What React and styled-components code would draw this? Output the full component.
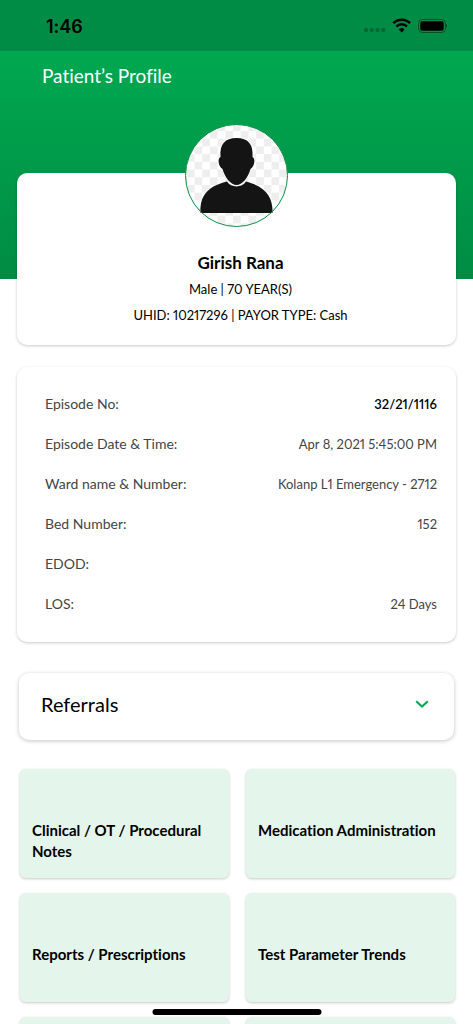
import React, { useState } from 'react';
import styled, { createGlobalStyle } from 'styled-components';

const episode = [
    { label: 'Episode No:', value: '32/21/1116', strong: true },
    { label: 'Episode Date & Time:', value: 'Apr 8, 2021 5:45:00 PM' },
    { label: 'Ward name & Number:', value: 'Kolanp L1 Emergency - 2712' },
    { label: 'Bed Number:', value: '152' },
    { label: 'EDOD:', value: '' },
    { label: 'LOS:', value: '24 Days' },
];

const tiles = [
    'Clinical / OT / Procedural Notes',
    'Medication Administration',
    'Reports / Prescriptions',
    'Test Parameter Trends',
];

function StatusIcons() {
    return (
        <svg width="84" height="16" viewBox="0 0 84 16" aria-hidden="true">
            <g fill="#000" opacity="0.25">
                <rect x="1" y="10" width="4" height="4" rx="1.5" />
                <rect x="6.8" y="10" width="4" height="4" rx="1.5" />
                <rect x="12.5" y="10" width="4" height="4" rx="1.5" />
                <rect x="18.2" y="10" width="4" height="4" rx="1.5" />
            </g>
            <g fill="none" stroke="#000" strokeWidth="2.5">
                <path d="M30.3 5.2a11.9 11.9 0 0 1 16.8 0" />
                <path d="M33.4 8.5a7.6 7.6 0 0 1 10.6 0" />
            </g>
            <path d="M38.7 14.4l-2.9-2.9a4.1 4.1 0 0 1 5.8 0z" fill="#000" />
            <rect x="55.5" y="1.5" width="27" height="13" rx="4" fill="none" stroke="#000" strokeOpacity="0.4" />
            <rect x="57.3" y="3.3" width="23.4" height="9.4" rx="2.2" fill="#000" />
            <path d="M83 6v4c1.3-.7 1.3-3.3 0-4z" fill="#000" fillOpacity="0.45" />
        </svg>
    );
}

function Silhouette() {
    return (
        <svg viewBox="0 0 103 103" role="img" aria-label="Patient">
            <defs>
                <pattern id="checks" x="9.5" y="7" width="15.4" height="15.4" patternUnits="userSpaceOnUse">
                    <rect width="15.4" height="15.4" fill="#fff" />
                    <rect width="7.7" height="7.7" fill="#eee" />
                    <rect x="7.7" y="7.7" width="7.7" height="7.7" fill="#eee" />
                </pattern>
            </defs>
            <circle cx="51.5" cy="51.5" r="51" fill="url(#checks)" />
            <path
                d="M15.5 89C15 74 20 63 42 57.5C46 64 57 64 61 57.5C82 63 88 74 87.5 89Z"
                fill="#141414"
            />
            <path
                d="M51.5 14C40 14 34.5 20 35.5 33C32.5 34 33 42 37.5 45C40 54 46 61 51.5 61C57 61 63 54 65.5 45C70 42 70.5 34 67.5 33C68.5 20 63 14 51.5 14Z"
                fill="#141414"
                stroke="#fff"
                strokeWidth="1.5"
                paintOrder="stroke"
            />
            <circle cx="51.5" cy="51.5" r="51" fill="none" stroke="#0a8f45" />
        </svg>
    );
}

function App() {
    const [open, setOpen] = useState(false);

    return (
        <Screen>
            <GlobalStyle />
            <StatusBar>
                <Time>1:46</Time>
                <StatusIcons />
            </StatusBar>
            <Hero>
                <Title>Patient’s Profile</Title>
            </Hero>
            <Content>
                <ProfileCard>
                    <Avatar>
                        <Silhouette />
                    </Avatar>
                    <ProfileText>
                        <Name>Girish Rana</Name>
                        <Detail>Male | 70 YEAR(S)</Detail>
                        <Detail>UHID: 10217296 | PAYOR TYPE: Cash</Detail>
                    </ProfileText>
                </ProfileCard>
                <EpisodeCard>
                    {episode.map((row) => (
                        <Row key={row.label}>
                            <dt>{row.label}</dt>
                            <Value $strong={row.strong}>{row.value}</Value>
                        </Row>
                    ))}
                </EpisodeCard>
                <Referrals type="button" aria-expanded={open} onClick={() => setOpen(!open)}>
                    Referrals
                    <Chevron $open={open} width="14" height="8" viewBox="0 0 14 8" aria-hidden="true">
                        <path d="M1.2 1.2L7 6.6L12.8 1.2" />
                    </Chevron>
                </Referrals>
                <Tiles>
                    {tiles.map((tile) => (
                        <Tile key={tile} type="button">{tile}</Tile>
                    ))}
                    <Tile type="button" aria-label="Discharge" />
                    <Tile type="button" aria-label="Billing" />
                </Tiles>
            </Content>
            <HomeIndicator />
        </Screen>
    );
}

export default App;

const GlobalStyle = createGlobalStyle`
* {
    box-sizing: border-box;
}
body {
    margin: 0;
    background: #fff;
    color: #000;
    font-family: Lato, "Liberation Sans", sans-serif;
    font-variant-ligatures: none;
    font-variant-numeric: proportional-nums;
}
button {
    font-family: inherit;
    font-variant-ligatures: inherit;
    color: inherit;
    border: 0;
    cursor: pointer;
}
`

const Screen = styled.div`
height: 100vh;
overflow-x: hidden;
overflow-y: auto;
scrollbar-width: none;
`

const StatusBar = styled.header`
position: sticky;
top: 0;
z-index: 2;
display: flex;
align-items: center;
justify-content: space-between;
height: 51px;
padding: 1px 26px 0 46px;
background: #008c44;
`

const Time = styled.span`
font-family: Inter, sans-serif;
font-size: 18px;
font-weight: 600;
`

const Hero = styled.div`
height: 228px;
padding: 12px 42px;
background: linear-gradient(#00a850, #008c44);
`

const Title = styled.h1`
margin: 0;
color: #fff;
font-size: 19px;
font-weight: 400;
line-height: 26px;
`

const Content = styled.main`
display: flex;
flex-direction: column;
margin-top: -106px;
padding: 0 17px 24px;
`

const Card = styled.section`
background: #fff;
border-radius: 10px;
box-shadow: 0 1px 3px rgba(0, 0, 0, 0.22);
`

const ProfileCard = styled(Card)`
display: flex;
flex-direction: column;
align-items: center;
padding-bottom: 17px;
`

const Avatar = styled.div`
width: 103px;
height: 103px;
margin-top: -49px;
margin-bottom: 22px;

svg {
    display: block;
}
`

const ProfileText = styled.div`
padding-left: 8px;
text-align: center;
`

const Name = styled.h2`
margin: 0;
font-size: 17px;
font-weight: 700;
line-height: 27px;
`

const Detail = styled.p`
margin: 0;
font-size: 13px;
line-height: 26px;
`

const EpisodeCard = styled(Card).attrs({ as: 'dl' })`
margin: 22px 0 0;
padding: 17px 19px 18px 28px;
`

const Row = styled.div`
display: flex;
align-items: baseline;
justify-content: space-between;
height: 40px;
color: #444;
font-size: 14px;
line-height: 40px;
`

const Value = styled.dd`
margin: 0;
color: ${(props) => (props.$strong ? '#000' : 'inherit')};
font-size: 13px;
font-weight: ${(props) => (props.$strong ? 600 : 400)};
`

const Referrals = styled.button`
display: flex;
align-items: center;
justify-content: space-between;
height: 67px;
margin: 31px 2px 0;
padding: 0 25px 6px 22px;
background: #fff;
border-radius: 10px;
box-shadow: 0 1px 4px rgba(0, 0, 0, 0.24);
font-size: 20px;
`

const Chevron = styled.svg`
fill: none;
stroke: #00a850;
stroke-width: 2;
transform: ${(props) => (props.$open ? 'rotate(180deg)' : 'none')};
`

const Tiles = styled.div`
display: grid;
grid-template-columns: 1fr 1fr;
gap: 15px 17px;
margin-top: 29px;
padding: 0 1px 0 3px;
`

const Tile = styled.button`
display: flex;
align-items: flex-start;
height: 109px;
padding: 51px 12px 0;
background: #e4f5eb;
border-radius: 6px;
box-shadow: 0 1px 3px rgba(0, 0, 0, 0.22);
font-size: 15px;
font-weight: 700;
line-height: 21px;
text-align: left;
`

const HomeIndicator = styled.div`
position: fixed;
bottom: 9px;
left: 50%;
width: 169px;
height: 6px;
border-radius: 3px;
background: #000;
transform: translateX(-50%);
`
